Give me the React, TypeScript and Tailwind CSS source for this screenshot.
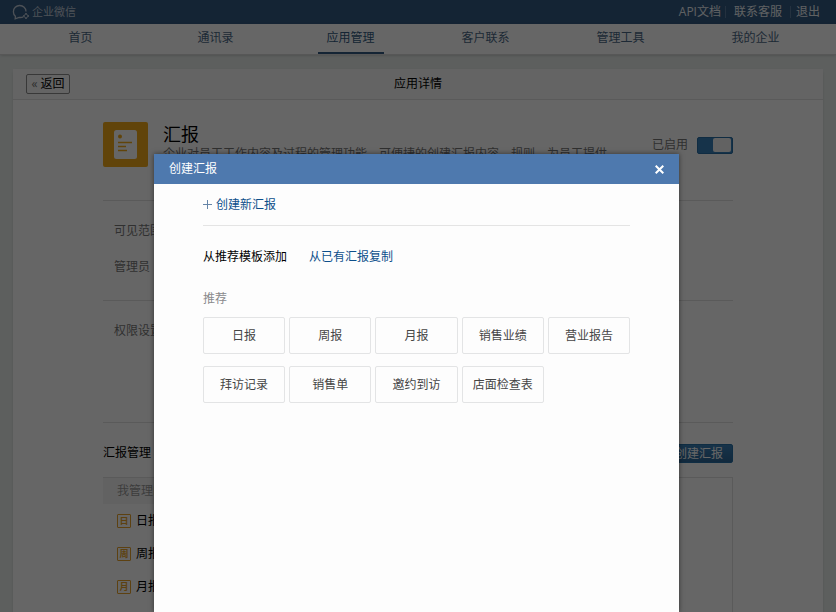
const navItems = ['首页', '通讯录', '应用管理', '客户联系', '管理工具', '我的企业'];
const templates = ['日报', '周报', '月报', '销售业绩', '营业报告', '拜访记录', '销售单', '邀约到访', '店面检查表'];
const reports = [
  { mark: '日', name: '日报' },
  { mark: '周', name: '周报' },
  { mark: '月', name: '月报' },
];

function TopBar() {
  return (
    <header className="flex h-6 shrink-0 items-center justify-between bg-[#335a82] pr-4 pl-3 text-[#eef2f6]">
      <a href="#home" className="flex items-center gap-[2px] text-[11px] leading-4 text-[#c0cbd8]">
        <svg width="18" height="16" viewBox="0 0 18 16" fill="none" stroke="currentColor" strokeWidth="1.3">
          <path d="M11.300 12.800c-1.200.6-2.700.8-4.200.6L3.200 14.800l.2-2.600C1.900 11 1.400 9.500 1.400 7.700 1.400 4.200 4.200 1.500 7.700 1.500s6.300 2.600 6.300 5.900" />
          <path d="M14 9l1 2 2 1-2 1-1 2-1-2-2-1 2-1z" strokeWidth="1" />
        </svg>
        企业微信
      </a>
      <div className="flex items-center leading-4">
        <a href="#api">API文档</a>
        <span className="mr-2 ml-1 h-3 w-px bg-[#5b7c9d]" />
        <a href="#support">联系客服</a>
        <span className="mr-[5px] ml-2 h-3 w-px bg-[#5b7c9d]" />
        <a href="#logout">退出</a>
      </div>
    </header>
  );
}

function NavBar() {
  return (
    <nav className="grid h-[31px] shrink-0 grid-cols-6 border-b border-[#dadada] bg-white px-[13px] shadow-sm">
      {navItems.map((item) => (
        <a
          key={item}
          href={`#${item}`}
          className={
            item === '应用管理'
              ? 'flex h-[30px] w-[66px] items-center justify-center justify-self-center border-b-2 border-[#335a82] text-[#335a82]'
              : 'flex h-[30px] items-center justify-center border-b-2 border-transparent text-[#4a6785]'
          }
        >
          {item}
        </a>
      ))}
    </nav>
  );
}

function AppDetail() {
  return (
    <main className="mx-[13px] mt-[14px] rounded-t-sm bg-white shadow">
      <div className="grid h-[31px] grid-cols-3 items-center border-b border-[#e0e0e0] bg-[#f9f9f9] px-[13px]">
        <button className="flex h-5 w-11 items-center justify-center gap-[3px] rounded-xs border border-[#8c8c8c] text-black">
          <span className="text-[#777]">«</span>返回
        </button>
        <h1 className="text-center text-black">应用详情</h1>
      </div>

      <div className="px-[90px]">
        <section className="flex h-[101px] border-b border-[#e2e2e2] pt-[22px]">
          <svg width="45" height="45" viewBox="0 0 45 45" className="shrink-0">
            <rect width="45" height="45" rx="2" fill="#f3ab1b" />
            <rect x="11" y="8" width="23" height="29" rx="2.500" fill="#fff" />
            <circle cx="17" cy="14.500" r="2" fill="#f3ab1b" />
            <path d="M15 20.500h14M15 24.500h8M15 28.500h9" stroke="#f3ab1b" strokeWidth="1.400" />
          </svg>
          <div className="ml-[15px] min-w-0 flex-1">
            <h2 className="text-lg leading-6 text-black">汇报</h2>
            <p className="overflow-hidden leading-4 whitespace-nowrap text-[#777]">
              企业对员工工作内容及过程的管理功能，可便捷的创建汇报内容、规则，为员工提供
            </p>
          </div>
          <label className="mt-[14px] flex h-[18px] shrink-0 items-center gap-[9px] text-[#777]">
            已启用
            <input
              type="checkbox"
              defaultChecked
              className="relative h-[17px] w-9 appearance-none rounded-xs border border-[#2a6fa5] bg-[#377fb8] before:absolute before:top-0 before:right-px before:h-[14px] before:w-[18px] before:rounded-xs before:bg-[#f5f5f5]"
            />
          </label>
        </section>
        <section className="flex h-[100px] flex-col gap-4 border-b border-[#e2e2e2] px-[11px] pt-5 text-[#787878]">
          <p>可见范围</p>
          <p>管理员</p>
        </section>
        <section className="h-[122px] border-b border-[#e2e2e2] px-[11px] pt-5 text-[#787878]">
          <p>权限设置</p>
        </section>
        <div className="flex h-[54px] items-center justify-between pt-[6px]">
          <h3 className="text-black">汇报管理</h3>
          <button className="h-[19px] rounded-xs border border-[#2670a8] bg-linear-to-b from-[#3a80b8] to-[#2d6798] px-[9px] leading-[17px] text-white">
            创建汇报
          </button>
        </div>
        <section className="flex h-[400px] border border-l-0 border-[#e0e0e0]">
          <div className="w-[170px]">
            <h4 className="h-[26px] bg-[#f5f5f5] px-[14px] leading-[26px] text-[#999]">我管理的</h4>
            {reports.map((report) => (
              <a
                key={report.name}
                href={`#${report.name}`}
                className="flex h-[33px] items-center gap-[5px] px-[14px] text-black"
              >
                <span className="flex size-[14px] items-center justify-center rounded-[1px] border border-[#e8a42b] text-[9px] leading-none font-bold text-[#e8a42b]">
                  {report.mark}
                </span>
                {report.name}
              </a>
            ))}
          </div>
        </section>
      </div>
    </main>
  );
}

function CreateDialog() {
  return (
    <div className="absolute inset-0 flex justify-center bg-black/60 pt-[154px] pr-[3px]">
      <div
        role="dialog"
        aria-labelledby="dialog-title"
        className="w-full max-w-[525px] bg-[#fdfdfd] shadow-[0_0_5px_rgba(0,0,0,0.5)]"
      >
        <div className="flex h-[30px] items-center justify-between bg-[#4e79ae] px-[15px] text-white">
          <h2 id="dialog-title">创建汇报</h2>
          <button aria-label="关闭">
            <svg width="9" height="9" viewBox="0 0 9 9" stroke="currentColor" strokeWidth="2">
              <path d="M.7.7l7.600 7.600M8.300.7L.7 8.300" />
            </svg>
          </button>
        </div>
        <div className="px-[49px]">
          <div className="flex h-[42px] items-center border-b border-[#e4e4e4]">
            <button className="flex items-center gap-1 text-[#0d4f8b]">
              <svg width="9" height="9" viewBox="0 0 9 9" stroke="#6685a8">
                <path d="M4.500 0v9M0 4.500h9" />
              </svg>
              创建新汇报
            </button>
          </div>
          <div className="flex gap-[22px] pt-[21px]">
            <button className="text-black">从推荐模板添加</button>
            <button className="text-[#0d4f8b]">从已有汇报复制</button>
          </div>
          <h3 className="pt-[22px] text-[#8a8a8c]">推荐</h3>
          <div className="grid grid-cols-5 gap-x-1 gap-y-3 pt-2">
            {templates.map((name) => (
              <button key={name} className="h-[37px] rounded-xs border border-[#e3e4e5] text-[#454545]">
                {name}
              </button>
            ))}
          </div>
        </div>
      </div>
    </div>
  );
}

export default function App() {
  return (
    <div className="relative flex h-screen flex-col overflow-hidden bg-[#e9eeec] font-['Open_Sans','Noto_Sans_CJK_SC',sans-serif] text-xs leading-5">
      <TopBar />
      <NavBar />
      <AppDetail />
      <CreateDialog />
    </div>
  );
}
